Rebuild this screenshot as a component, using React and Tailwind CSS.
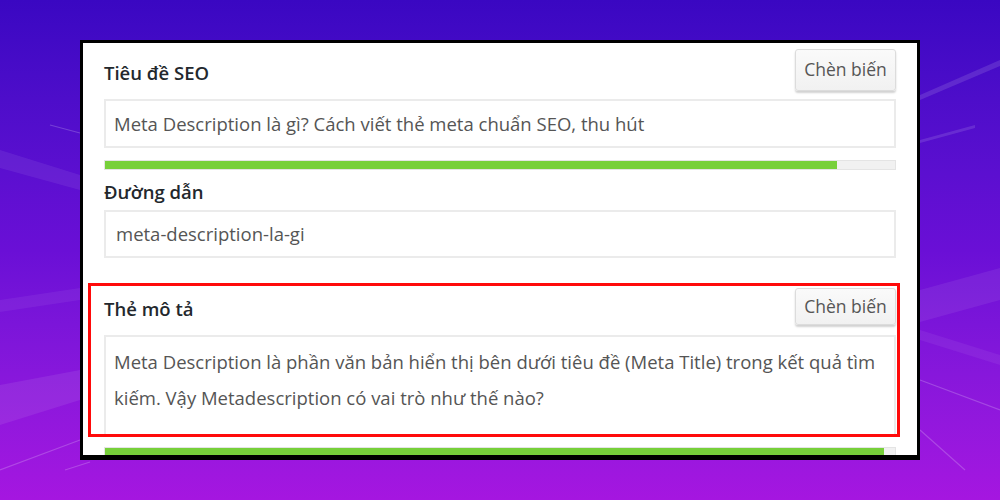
function InsertButton({ className }) {
  return (
    <button
      className={`shrink-0 w-[101px] rounded-[3px] border border-[#dcdcdc] bg-gradient-to-b from-[#fafafa] to-[#f1f1f1] text-[17.5px] text-[#555] shadow-[0_2px_2px_rgba(0,0,0,0.18)] ${className}`}
    >
      Chèn biến
    </button>
  );
}

function Progress({ pct, className }) {
  return (
    <div className={`h-[10px] border border-[#e4e4e4] bg-[#f1f1f1] ${className}`}>
      <div className="h-full bg-[#77d03a]" style={{ width: `${pct}%` }} />
    </div>
  );
}

function Background() {
  return (
    <svg className="absolute inset-0 h-full w-full" viewBox="0 0 1000 500" preserveAspectRatio="none">
      <g fill="#ffffff">
        <polygon points="0,150 80,175 80,190 0,168" opacity="0.07" />
        <polygon points="0,300 80,288 80,300 0,312" opacity="0.06" />
        <polygon points="0,385 80,370 80,400 0,425" opacity="0.08" />
        <polygon points="920,290 1000,268 1000,300 920,322" opacity="0.07" />
        <polygon points="920,95 1000,60 1000,66 920,100" opacity="0.12" />
        <polygon points="920,140 975,125 975,128 920,143" opacity="0.12" />
        <polygon points="920,330 1000,355 1000,365 920,340" opacity="0.06" />
      </g>
      <g stroke="#ffffff" strokeWidth="1.2" opacity="0.2">
        <line x1="50" y1="125" x2="80" y2="133" />
        <line x1="0" y1="470" x2="80" y2="440" />
        <line x1="65" y1="470" x2="90" y2="462" />
        <line x1="920" y1="430" x2="965" y2="470" />
        <line x1="920" y1="380" x2="1000" y2="410" />
      </g>
    </svg>
  );
}

export default function App() {
  return (
    <div className="relative h-[500px] w-[1000px] overflow-hidden bg-gradient-to-b from-[#3a07c2] via-[#6a0fd6] to-[#a516e0] font-['Open_Sans','Noto_Sans',sans-serif]">
      <Background />
      <div className="relative ml-[80px] mt-[40px] h-[420px] w-[840px] overflow-hidden border-[3px] border-b-[5px] border-black bg-white pl-[21px] pr-[21px] pt-[5px]">
        {/* Tiêu đề SEO */}
        <div className="flex h-[43px] items-center justify-between">
          <span className="mt-[6px] text-[18.5px] font-semibold text-[#23282d]">Tiêu đề SEO</span>
          <InsertButton className="h-[42px]" />
        </div>
        <div className="mt-[8px] flex h-[49px] items-center border-2 border-[#ebebeb] px-[8px] text-[18.5px] text-[#555]">
          Meta Description là gì? Cách viết thẻ meta chuẩn SEO, thu hút
        </div>
        <Progress pct={92.7} className="mt-[12px]" />

        {/* Đường dẫn */}
        <div className="flex h-[40px] items-center pt-[3px] text-[18.5px] font-semibold text-[#23282d]">Đường dẫn</div>
        <div className="flex h-[48px] items-center border-2 border-[#ebebeb] px-[10px] text-[18.5px] text-[#555]">
          meta-description-la-gi
        </div>

        {/* Thẻ mô tả */}
        <div className="mt-[25px] -ml-[16px] -mr-[4px] h-[154px] overflow-hidden border-[3px] border-[#ff0a0a] pl-[13px] pr-[1px] pt-[2px]">
          <div className="flex h-[37px] items-center justify-between">
            <span className="mt-[4px] text-[18.5px] font-semibold text-[#23282d]">Thẻ mô tả</span>
            <InsertButton className="h-[37px]" />
          </div>
          <div className="mt-[10px] h-[130px] border-2 border-[#ebebeb] px-[8px] pt-[7px] text-[18.5px] leading-[36px] text-[#555]">
            Meta Description là phần văn bản hiển thị bên dưới tiêu đề (Meta Title) trong kết quả tìm kiếm. Vậy Metadescription có vai trò như thế nào?
          </div>
        </div>
        <Progress pct={98.6} className="mt-[10px]" />
      </div>
    </div>
  );
}
